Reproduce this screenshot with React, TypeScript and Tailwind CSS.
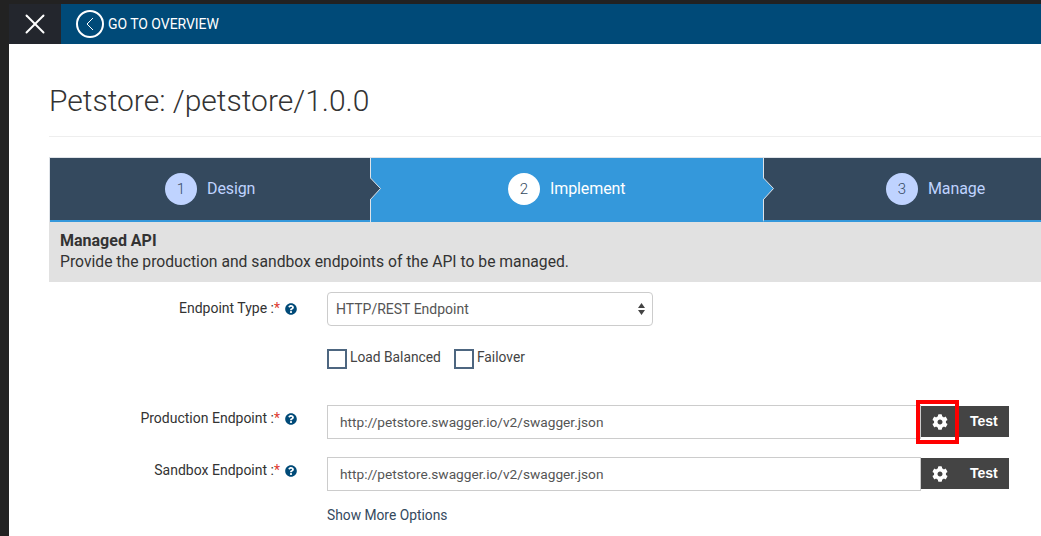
import { X } from 'lucide-react';
import { FaCog, FaQuestionCircle } from 'react-icons/fa';

const steps = [
  { n: 1, label: 'Design', width: 'w-[320px]', pl: 'pl-[115px]', active: false },
  { n: 2, label: 'Implement', width: 'w-[393px]', pl: 'pl-[137px]', active: true },
  { n: 3, label: 'Manage', width: 'flex-1', pl: 'pl-[122px]', active: false },
];

function Step({ n, label, width, pl, active }: (typeof steps)[number]) {
  return (
    <div
      className={`relative flex h-[64px] shrink-0 items-center gap-[8px] border-l border-[#dfe3e8] first:border-l-0 ${width} ${pl} ${
        active ? 'bg-[#3498db] pb-[2px]' : 'border-b-2 border-b-[#3498db] bg-[#34495e]'
      }`}
    >
      <span
        className={`flex h-[32px] w-[32px] shrink-0 items-center justify-center rounded-full text-[15px] font-light text-[#34495e] ${
          active ? 'bg-white' : 'bg-[#bfd3ff]'
        }`}
      >
        {n}
      </span>
      <span className={`ml-[2px] text-[16px] tracking-[-0.1px] ${active ? 'text-white' : 'text-[#bfd3ff]'}`}>{label}</span>
      {n < 3 && (
        <svg
          className="absolute right-[-12px] top-[19px] z-10 h-[24px] w-[12px]"
          viewBox="0 0 12 24"
          fill={active ? '#3498db' : '#34495e'}
          stroke="#dfe3e8"
        >
          <path d="M0 0.5 L10.5 11.5 L0 23" />
        </svg>
      )}
    </div>
  );
}

function FieldLabel({ text, raised }: { text: string; raised?: boolean }) {
  return (
    <div className={`flex w-[248px] shrink-0 items-center justify-end text-[14px] text-[#333] ${raised ? 'pb-[6px]' : ''}`}>
      <div className="flex pb-[2px]">
        <span>{text} :</span>
        <span className="text-[#e03a2f]">*</span>
      </div>
      <FaQuestionCircle className="ml-[5px] h-[12px] w-[12px] text-[#004a78]" />
    </div>
  );
}

function EndpointRow({ label, highlight }: { label: string; highlight?: boolean }) {
  return (
    <div className="flex h-[34px] items-start">
      <div className="flex h-[34px] items-center">
        <FieldLabel text={label} raised />
      </div>
      <div className="ml-[30px] flex h-[34px] w-[594px] shrink-0 items-center border border-[#cccccc] pl-[12px] text-[13.7px] text-[#555]">
        http://petstore.swagger.io/v2/swagger.json
      </div>
      <div className="relative mt-[1px] flex h-[31px] w-[88px] shrink-0 items-center bg-[#444444] text-white">
        <FaCog className="ml-[11px] h-[16px] w-[16px]" />
        <span className="ml-[22px] font-['Liberation_Sans',sans-serif] text-[14px] font-bold">Test</span>
        {highlight && (
          <span className="absolute left-[-5px] top-[-6px] h-[44px] w-[43px] border-4 border-[#ff0000]" />
        )}
      </div>
    </div>
  );
}

export default function App() {
  return (
    <div className="h-[536px] w-[1041px] overflow-hidden bg-[#222222] pt-[4px] font-['Roboto',sans-serif]">
      <header className="ml-[9px] flex h-[40px] bg-[#004a78] text-white">
        <div className="flex w-[52px] items-center justify-center bg-[#23262d]">
          <X className="h-[34px] w-[34px]" strokeWidth={1.35} />
        </div>
        <div className="ml-[15px] flex items-center">
          <span className="flex h-[28px] w-[28px] items-center justify-center rounded-full border-2 border-white">
            <svg className="h-[14px] w-[10px]" viewBox="0 0 10 14" fill="none" stroke="white" strokeWidth="1">
              <path d="M8 1 L2 7 L8 13" />
            </svg>
          </span>
          <span className="ml-[4px] text-[14px] tracking-[-0.05px]">GO TO OVERVIEW</span>
        </div>
      </header>

      <main className="ml-[9px] h-[492px] overflow-hidden bg-white pl-[40px]">
        <h1 className="flex h-[93px] items-start border-b border-[#eeeeee] pt-[37px] text-[30px] leading-[40px] font-light text-[#333]">
          Petstore: /petstore/1.0.0
        </h1>
        <div className="mt-[20px] flex border-t border-l border-[#dfe3e8]">
          {steps.map((s) => (
            <Step key={s.n} {...s} />
          ))}
        </div>
        <div className="h-[60px] bg-[#e1e1e1] pl-[11px] pt-[9px] text-[#333]">
          <p className="text-[16px] leading-[20px] font-bold">Managed API</p>
          <p className="mt-[1px] text-[15.7px] leading-[20px]">Provide the production and sandbox endpoints of the API to be managed.</p>
        </div>

        <div className="mt-[10px] flex h-[34px] items-center">
          <FieldLabel text="Endpoint Type" />
          <div className="ml-[30px] flex h-[34px] w-[326px] items-center justify-between rounded-[4px] border border-[#cccccc] pl-[8px] pr-[7px] text-[14px] text-[#555]">
            HTTP/REST Endpoint
            <svg className="h-[14px] w-[7px]" viewBox="0 0 7 14" fill="#444">
              <path d="M3.5 1 L7 6 H0 Z M3.5 13 L0 8 H7 Z" />
            </svg>
          </div>
        </div>

        <div className="ml-[278px] mt-[23px] flex h-[20px] items-center text-[13.8px] text-[#444]">
          <span className="h-[20px] w-[20px] border-2 border-[#4d6680]" />
          <span className="ml-[3px] -translate-y-[2px]">Load Balanced</span>
          <span className="ml-[13px] h-[20px] w-[20px] border-2 border-[#4d6680]" />
          <span className="ml-[3px] -translate-y-[2px]">Failover</span>
        </div>

        <div className="mt-[36px]">
          <EndpointRow label="Production Endpoint" highlight />
        </div>
        <div className="mt-[18px]">
          <EndpointRow label="Sandbox Endpoint" />
        </div>
        <p className="ml-[278px] mt-[14px] text-[13.8px] text-[#34495e]">Show More Options</p>
      </main>
    </div>
  );
}
